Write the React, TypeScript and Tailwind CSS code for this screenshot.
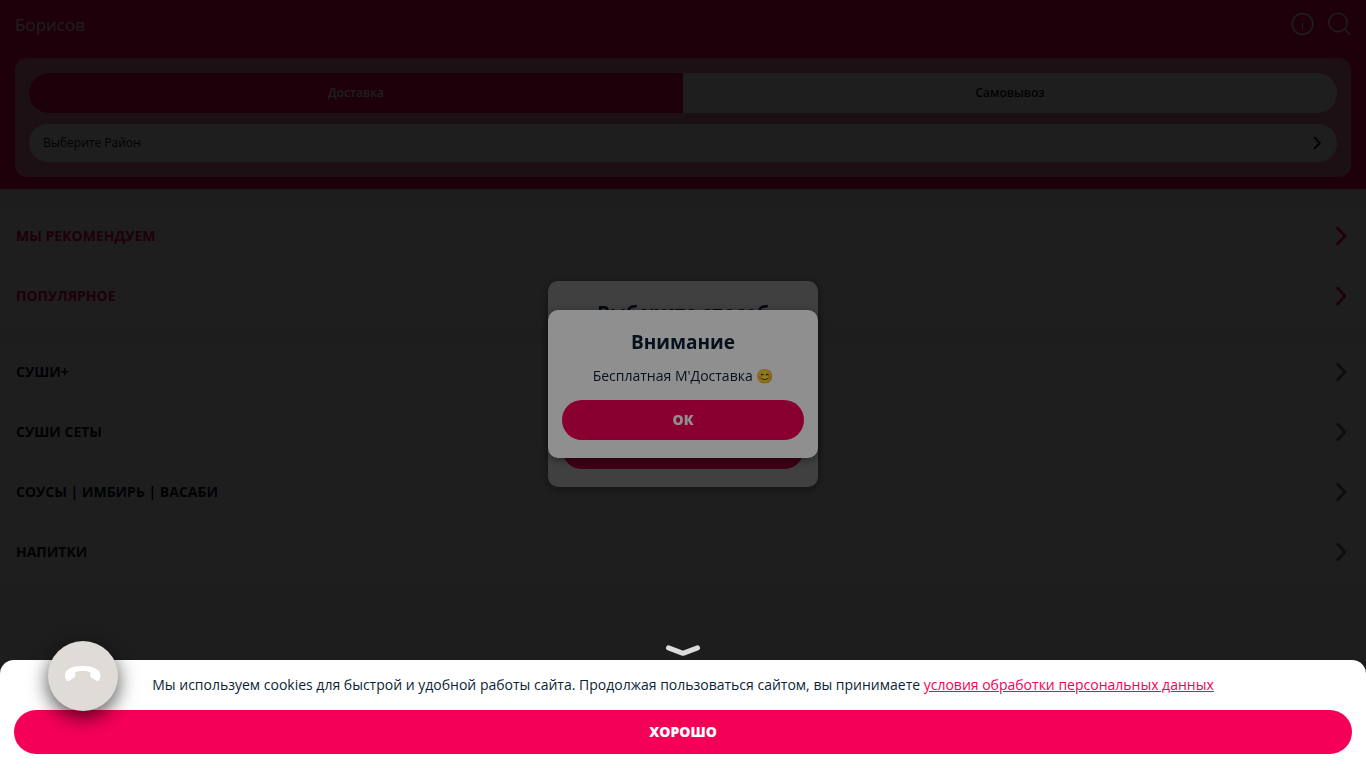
import { useState } from "react";
import clsx from "clsx";

type Category = {
  title: string;
  highlighted?: boolean;
};

const featured: Category[] = [
  { title: "Мы рекомендуем", highlighted: true },
  { title: "Популярное", highlighted: true },
];

const categories: Category[] = [
  { title: "Суши+" },
  { title: "Суши сеты" },
  { title: "Соусы | Имбирь | Васаби" },
  { title: "Напитки" },
];

function Chevron({ className }: { className?: string }) {
  return (
    <svg
      viewBox="0 0 12 20"
      fill="none"
      stroke="currentColor"
      strokeLinecap="round"
      strokeLinejoin="round"
      className={className}
      aria-hidden="true"
    >
      <path d="M2.500 2l7.500 8-7.500 8" />
    </svg>
  );
}

function InfoIcon() {
  return (
    <svg viewBox="0 0 24 24" fill="none" stroke="currentColor" className="size-6" aria-hidden="true">
      <circle cx="11.500" cy="12" r="10.400" strokeWidth="1.500" />
      <path d="M11.500 11v6M11.500 7v1" strokeWidth="1" />
    </svg>
  );
}

function SearchIcon() {
  return (
    <svg viewBox="0 0 24 24" fill="none" stroke="currentColor" strokeWidth="1.500" className="size-6" aria-hidden="true">
      <circle cx="11" cy="10.500" r="9.200" />
      <path d="M17.300 16.800l6 6" />
    </svg>
  );
}

function CategoryList({ items }: { items: Category[] }) {
  return (
    <ul className="bg-white">
      {items.map((item) => (
        <li key={item.title}>
          <button
            type="button"
            className={clsx(
              "flex h-15 w-full items-center justify-between px-4 text-sm font-bold uppercase",
              item.highlighted ? "text-[#f50057]" : "text-[#07121f]",
            )}
          >
            <span>{item.title}</span>
            <Chevron
              className={clsx("mr-[3px] h-5 w-3 stroke-[2.8]", !item.highlighted && "text-neutral-500")}
            />
          </button>
        </li>
      ))}
    </ul>
  );
}

function Header() {
  const [mode, setMode] = useState<"delivery" | "pickup">("delivery");

  return (
    <header className="bg-[#f50057] px-[15px] pb-3 text-white">
      <div className="flex h-[58px] items-start justify-between pt-3">
        <span className="text-[17px] leading-[26px]">Борисов</span>
        <div className="flex gap-3">
          <button type="button" aria-label="Информация">
            <InfoIcon />
          </button>
          <button type="button" aria-label="Поиск">
            <SearchIcon />
          </button>
        </div>
      </div>
      <div className="space-y-[11px] rounded-xl bg-[#ef89ab] px-[14px] py-[15px] text-xs">
        <div className="flex h-10 overflow-hidden rounded-full bg-white font-semibold">
          <button
            type="button"
            onClick={() => setMode("delivery")}
            className={clsx("flex-1", mode === "delivery" ? "bg-[#f50057] text-white" : "text-[#07121f]")}
          >
            Доставка
          </button>
          <button
            type="button"
            onClick={() => setMode("pickup")}
            className={clsx("flex-1", mode === "pickup" ? "bg-[#f50057] text-white" : "text-[#07121f]")}
          >
            Самовывоз
          </button>
        </div>
        <button
          type="button"
          className="flex h-[38px] w-full items-center justify-between rounded-full bg-white pr-4 pl-[14px] text-[#07121f]"
        >
          <span>Выберите Район</span>
          <Chevron className="h-[14px] w-2 stroke-3" />
        </button>
      </div>
    </header>
  );
}

function Dialogs() {
  return (
    <>
      <div className="fixed inset-0 z-10 flex items-center justify-center bg-black/54">
        <div
          role="dialog"
          aria-labelledby="method-title"
          className="flex min-h-[206px] w-[270px] flex-col justify-between rounded-[10px] bg-white px-[14px] py-[18px] text-center shadow-[0_2px_10px_rgba(0,0,0,0.4)]"
        >
          <h2 id="method-title" className="text-[19px] leading-7 font-bold text-[#0b1f35]">
            Выберите способ
          </h2>
          <button type="button" aria-label="Выбрать" className="h-10 w-full rounded-full bg-[#f50057]" />
        </div>
      </div>
      <div className="fixed inset-0 z-20 flex items-center justify-center bg-black/55">
        <div
          role="dialog"
          aria-labelledby="notice-title"
          className="w-[270px] rounded-[10px] bg-white px-[14px] py-[18px] text-center text-[#0b1f35] shadow-[0_2px_10px_rgba(0,0,0,0.4)]"
        >
          <h2 id="notice-title" className="text-[19px] leading-7 font-bold">
            Внимание
          </h2>
          <p className="mt-2 text-sm leading-6">Бесплатная М'Доставка 😊</p>
          <button
            type="button"
            className="mt-3 h-10 w-full rounded-full bg-[#f50057] text-sm font-extrabold text-white"
          >
            ОК
          </button>
        </div>
      </div>
    </>
  );
}

function CookieSheet() {
  return (
    <div className="fixed inset-0 z-30 flex flex-col justify-end bg-black/44">
      <button type="button" aria-label="Свернуть" className="mx-auto mb-1 text-[#dcdcdc]">
        <svg viewBox="0 0 34 11" fill="none" stroke="currentColor" className="h-[11px] w-[34px]" aria-hidden="true">
          <path d="M2.500 2.800L17 8.300l14.500-5.500" strokeWidth="5" strokeLinecap="round" strokeLinejoin="round" />
        </svg>
      </button>
      <div className="rounded-t-[14px] bg-white p-[14px] text-center text-sm text-[#0b1f35]">
        <p className="leading-[22px]">
          Мы используем cookies для быстрой и удобной работы сайта. Продолжая пользоваться сайтом, вы принимаете{" "}
          <a href="#privacy" className="text-[#f50057] underline">
            условия обработки персональных данных
          </a>
        </p>
        <button
          type="button"
          className="mt-[14px] h-11 w-full rounded-full bg-[#f50057] font-extrabold text-white"
        >
          ХОРОШО
        </button>
      </div>
    </div>
  );
}

function CallButton() {
  return (
    <button
      type="button"
      aria-label="Позвонить"
      className="fixed bottom-[57px] left-12 z-40 flex size-[70px] items-center justify-center rounded-full bg-[#dfdcd8] text-white shadow-[0_6px_20px_rgba(0,0,0,0.7)]"
    >
      <svg viewBox="0 0 36 20" fill="currentColor" className="h-5 w-9" aria-hidden="true">
        <path d="M17.500 0C27.500 0 35.500 3 35.500 9.500c0 1.900-.8 3.700-1.700 5-.4.600-1 .700-1.600.400l-5.900-3.200c-.7-.4-1-.8-1-1.500V6.300C23 5.400 20.300 5 17.500 5s-5.200.4-7.300 1.300v3.900c0 .7-.3 1.100-1 1.500l-5.400 3.200c-.6.3-1.200.2-1.600-.4C.8 13.200 0 11.400 0 9.500 0 3 7.500 0 17.500 0z" />
      </svg>
    </button>
  );
}

export default function App() {
  return (
    <div className="min-h-screen bg-neutral-100 font-['Open_Sans','Noto_Sans',sans-serif]">
      <Header />
      <main className="space-y-4 pt-[17px]">
        <CategoryList items={featured} />
        <CategoryList items={categories} />
      </main>
      <Dialogs />
      <CookieSheet />
      <CallButton />
    </div>
  );
}
